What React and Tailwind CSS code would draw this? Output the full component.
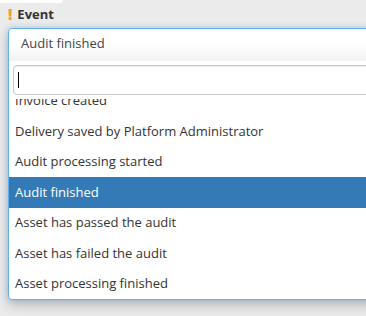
import React from 'react';

const options = [
    'Invoice created',
    'Delivery saved by Platform Administrator',
    'Audit processing started',
    'Audit finished',
    'Asset has passed the audit',
    'Asset has failed the audit',
    'Asset processing finished',
];

const App = () => {
    const selected = 'Audit finished';

    return (
        <div className="relative h-[316px] w-[366px] overflow-hidden bg-[#ebebeb] font-['Open_Sans',sans-serif] text-[13px] text-[#333]">
            <div className="h-[3px] w-[63px] rounded-br-[4px] bg-white" />

            <div className="flex h-[25px] items-start gap-[5px] pl-2 pt-[1px] leading-[20px]">
                <span className="text-[15px] font-extrabold text-[#f0a020]">!</span>
                <span className="font-bold text-[#333]">Event</span>
            </div>

            <div className="ml-2 w-[380px] rounded-[4px] border border-[#66afe9] bg-white shadow-[0_6px_12px_rgba(0,0,0,0.175),0_0_6px_rgba(102,175,233,0.5)]">
                <div className="flex h-[32px] items-center rounded-t-[4px] bg-gradient-to-b from-white from-40% to-[#f3f3f3] pb-[2px] pl-3 text-[#444]">
                    {selected}
                </div>

                <div className="px-1 pb-[4px] pt-[4px]">
                    <div className="flex h-[30px] items-center rounded-[4px] border border-[#c8c8c8] pl-1 shadow-[inset_0_1px_1px_rgba(0,0,0,0.075)]">
                        <div className="h-[16px] w-px bg-black" />
                    </div>
                </div>

                <div className="h-[200px] overflow-hidden">
                    <ul className="-mt-[13.5px]">
                        {options.map((option) => (
                            <li
                                key={option}
                                className={`flex h-[30.5px] items-center pl-[6px] ${option === selected ? 'bg-[#337ab7] text-white' : 'text-[#333]'}`}
                            >
                                {option}
                            </li>
                        ))}
                    </ul>
                </div>
            </div>
        </div>
    );
};

export default App;
